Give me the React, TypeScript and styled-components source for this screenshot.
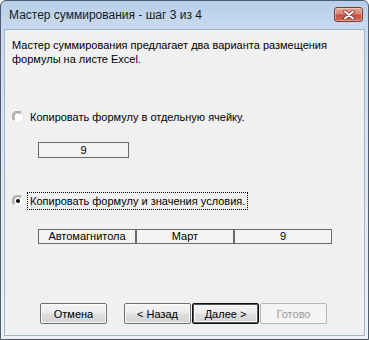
import React from "react";
import styled, { createGlobalStyle } from "styled-components";

const Global = createGlobalStyle`
  html, body { margin: 0; padding: 0; background: #ffffff; }
  body { width: 369px; height: 340px; overflow: hidden; }
`;

const Window = styled.div`
  box-sizing: border-box;
  width: 369px;
  height: 340px;
  border: 1px solid #4d5b6d;
  border-radius: 6px 6px 0 0;
  background: linear-gradient(180deg, #b7cfe9 0px, #c9dbef 30px, #dbe7f4 160px, #eaf1f9 340px);
  display: flex;
  flex-direction: column;
`;

const TitleBar = styled.div`
  height: 28px;
  display: flex;
  align-items: center;
  padding: 0 5px 0 8px;
  box-sizing: border-box;
`;

const Title = styled.div`
  flex: 1;
  font-family: "Liberation Sans", Arial, sans-serif;
  font-size: 12px;
  color: #1a1a1a;
`;

const CloseButton = styled.div`
  width: 29px;
  height: 15px;
  margin-top: -1px;
  box-sizing: border-box;
  border: 1px solid #7a3a35;
  border-radius: 3px;
  background: linear-gradient(180deg, #e9a99a 0%, #d88170 45%, #c6503f 55%, #d46a55 100%);
  display: flex;
  align-items: center;
  justify-content: center;
  box-shadow: inset 0 0 0 1px rgba(255, 255, 255, 0.35);
`;

const Client = styled.div`
  flex: 1;
  margin: 0 3px 3px 3px;
  background: #f0f0f0;
  border: 1px solid #9fb3ca;
  padding: 8px 0 0 6px;
  display: flex;
  flex-direction: column;
  font-family: "Liberation Sans", Arial, sans-serif;
  font-size: 11px;
  color: #000;
`;

const Para = styled.div`
  line-height: 14px;
  margin-left: 1px;
`;

const OptionRow = styled.div<{ $top: number }>`
  display: flex;
  align-items: center;
  margin-top: ${(p) => p.$top}px;
  height: 18px;
`;

const RadioBox = styled.div`
  width: 12px;
  height: 12px;
  margin-left: 1px;
  margin-right: 3px;
  display: flex;
`;

const Label = styled.span<{ $focused?: boolean }>`
  border: 1px dotted ${(p) => (p.$focused ? "#000" : "transparent")};
  padding: 1px 2px 1px 2px;
  line-height: 14px;
`;

const ValueBox = styled.div<{ $top: number }>`
  margin-top: ${(p) => p.$top}px;
  margin-left: 27px;
  width: 91px;
  height: 16px;
  box-sizing: border-box;
  border: 1px solid #6a6a6a;
  background: #f3f3f3;
  text-align: center;
  line-height: 14px;
`;

const Table = styled.div`
  margin-top: 19px;
  margin-left: 27px;
  display: flex;
`;

const Cell = styled.div<{ $w: number }>`
  width: ${(p) => p.$w}px;
  height: 15px;
  box-sizing: border-box;
  border: 1px solid #6a6a6a;
  background: #f3f3f3;
  text-align: center;
  line-height: 13px;
`;

const ButtonBar = styled.div`
  margin-top: 59px;
  margin-left: 29px;
  display: flex;
`;

const Button = styled.div<{ $gap: number; $variant?: "default" | "disabled" }>`
  width: 67px;
  height: 21px;
  box-sizing: border-box;
  margin-left: ${(p) => p.$gap}px;
  border: 1px solid
    ${(p) => (p.$variant === "default" ? "#111" : p.$variant === "disabled" ? "#b5b9bd" : "#707070")};
  border-radius: 2px;
  background: ${(p) =>
    p.$variant === "disabled"
      ? "#f4f4f4"
      : "linear-gradient(180deg, #f4f4f4 0%, #ececec 48%, #dedede 52%, #d4d4d4 100%)"};
  box-shadow: ${(p) =>
    p.$variant === "default"
      ? "inset 0 0 0 1px #555, inset 0 0 0 2px #f7f7f7"
      : p.$variant === "disabled"
      ? "none"
      : "inset 0 0 0 1px #fafafa"};
  color: ${(p) => (p.$variant === "disabled" ? "#9a9a9a" : "#000")};
  display: flex;
  align-items: center;
  justify-content: center;
  line-height: 14px;
`;

function Radio({ checked }: { checked?: boolean }) {
  return (
    <RadioBox>
      <svg width="12" height="12" viewBox="0 0 12 12">
        <circle cx="6" cy="6" r="5.5" fill="#ffffff" />
        <path d="M1.8 9.5 A5 5 0 0 1 9.5 1.8" stroke="#a8a8a8" strokeWidth="1.2" fill="none" />
        <path d="M2.8 8.6 A3.8 3.8 0 0 1 8.6 2.8" stroke="#6a6a6a" strokeWidth="0.9" fill="none" />
        <path d="M9.8 2.5 A5 5 0 0 1 2.5 9.8" stroke="#e6e6e6" strokeWidth="1" fill="none" />
        {checked && <circle cx="6" cy="6" r="2" fill="#000" />}
      </svg>
    </RadioBox>
  );
}

export default function App() {
  return (
    <>
      <Global />
      <Window>
        <TitleBar>
          <Title>Мастер суммирования - шаг 3 из 4</Title>
          <CloseButton>
            <svg width="12" height="10" viewBox="0 0 12 10">
              <path d="M2 1.5 L10 8.5 M10 1.5 L2 8.5" stroke="#6d2a22" strokeWidth="3.4" strokeLinecap="round" />
              <path d="M2 1.5 L10 8.5 M10 1.5 L2 8.5" stroke="#ffffff" strokeWidth="2" strokeLinecap="round" />
            </svg>
          </CloseButton>
        </TitleBar>
        <Client>
          <Para>
            Мастер суммирования предлагает два варианта размещения
            <br />
            формулы на листе Excel.
          </Para>
          <OptionRow $top={42}>
            <Radio />
            <Label>Копировать формулу в отдельную ячейку.</Label>
          </OptionRow>
          <ValueBox $top={16}>9</ValueBox>
          <OptionRow $top={34}>
            <Radio checked />
            <Label $focused>Копировать формулу и значения условия.</Label>
          </OptionRow>
          <Table>
            <Cell $w={98}>Автомагнитола</Cell>
            <Cell $w={98}>Март</Cell>
            <Cell $w={98}>9</Cell>
          </Table>
          <ButtonBar>
            <Button $gap={0}>Отмена</Button>
            <Button $gap={17}>&lt; Назад</Button>
            <Button $gap={1} $variant="default">
              Далее &gt;
            </Button>
            <Button $gap={1} $variant="disabled">
              Готово
            </Button>
          </ButtonBar>
        </Client>
      </Window>
    </>
  );
}
